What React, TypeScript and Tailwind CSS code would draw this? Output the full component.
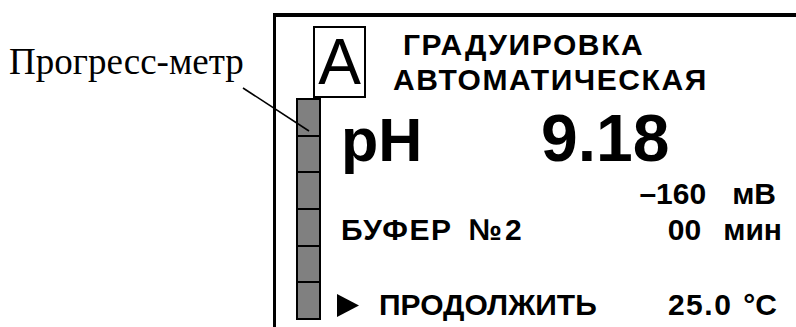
export default function App() {
  const segments = [0, 1, 2, 3, 4, 5]

  return (
    <div className="relative w-[796px] h-[327px] bg-white overflow-hidden flex text-black font-['Liberation_Sans',Arial,sans-serif]">
      {/* Annotation label */}
      <div className="w-[273px] shrink-0 pt-[43px] pl-[9px]">
        <span className="font-['Liberation_Serif','Times_New_Roman',serif] text-[37px] leading-[37px] whitespace-nowrap">
          Прогресс-метр
        </span>
      </div>

      {/* Display frame */}
      <div className="flex-1 mt-[13px] border-l-[3px] border-t-[4px] border-black flex flex-col">
        {/* Header */}
        <div className="flex pt-[9px] pl-[37px]">
          <div className="w-[53px] h-[72px] border-2 border-black flex items-center justify-center shrink-0">
            <span className="text-[64px] leading-[64px] font-normal">A</span>
          </div>
          <div className="ml-[27px] mt-[1px] font-bold text-[30px] leading-[35px] tracking-[1.6px] whitespace-nowrap">
            <div className="pl-[10px]">ГРАДУИРОВКА</div>
            <div>АВТОМАТИЧЕСКАЯ</div>
          </div>
        </div>

        {/* Body */}
        <div className="flex">
          {/* Progress meter */}
          <div className="ml-[20px] w-[25px] h-[222px] border-2 border-black flex flex-col divide-y-2 divide-black shrink-0">
            {segments.map((s) => (
              <div key={s} className="flex-1 bg-[#808080]" />
            ))}
          </div>

          <div className="ml-[16px] flex-1 flex flex-col font-bold whitespace-nowrap">
            <div className="mt-[7px] h-[66px] leading-[66px] flex items-baseline pl-[4px]">
              <span className="w-[200px] text-[61px]">pH</span>
              <span className="text-[66px]">9.18</span>
            </div>

            <div className="mt-[8px] h-[30px] text-[30px] leading-[30px] flex justify-end pr-[20px]">
              <span>–160</span>
              <span className="ml-[26px]">мВ</span>
            </div>

            <div className="mt-[6px] h-[30px] text-[30px] leading-[30px] flex pl-[4px] pr-[14px]">
              <span className="tracking-[1.5px]">БУФЕР</span>
              <span className="ml-[16px] tracking-[3px]">№2</span>
              <span className="ml-auto">00</span>
              <span className="ml-[22px]">мин</span>
            </div>

            <div className="mt-[45px] h-[30px] text-[30px] leading-[30px] flex items-center pr-[19px]">
              <svg width="22" height="23" viewBox="0 0 22 23" className="shrink-0">
                <polygon points="0,0 22,11.5 0,23" fill="black" />
              </svg>
              <span className="ml-[20px]">ПРОДОЛЖИТЬ</span>
              <span className="ml-auto tracking-[1.5px]">25.0</span>
              <span className="ml-[11px]">°C</span>
            </div>
          </div>
        </div>
      </div>

      {/* Leader line */}
      <svg className="absolute inset-0 pointer-events-none" width="796" height="327">
        <line x1="243" y1="88" x2="309" y2="131" stroke="black" strokeWidth="1.6" />
      </svg>
    </div>
  )
}
